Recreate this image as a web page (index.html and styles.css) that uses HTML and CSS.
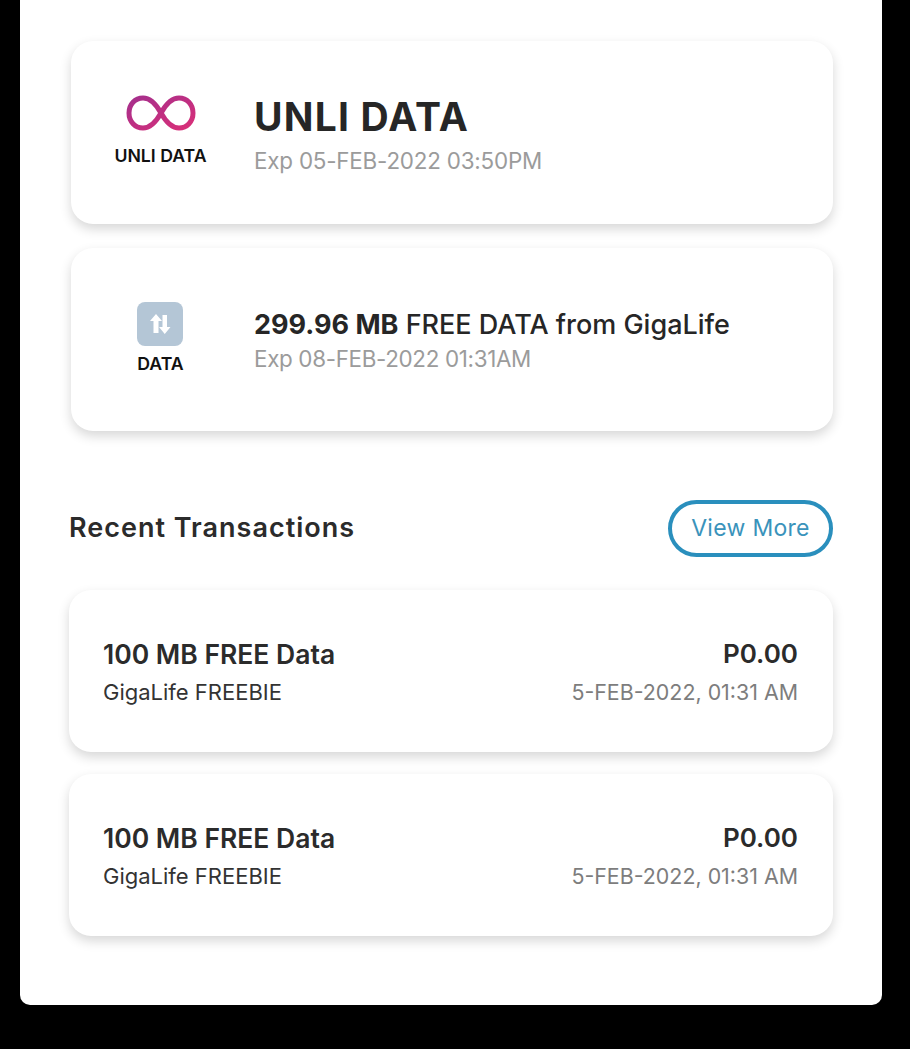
FILE: index.html
```html
<!DOCTYPE html>
<html lang="en">
<head>
<meta charset="utf-8">
<title>Balance</title>
<link rel="stylesheet" href="styles.css">
</head>
<body>
<main class="panel">
  <section class="plans">
    <article class="plan">
      <div class="plan-icon">
        <svg class="infinity" viewBox="0 0 70 36" width="70" height="36" aria-hidden="true">
          <defs>
            <linearGradient id="inf" x1="0" y1="0" x2="1" y2="1">
              <stop offset="0" stop-color="#a52f8c"/>
              <stop offset="1" stop-color="#d92f78"/>
            </linearGradient>
          </defs>
          <path d="M35 18C30 9 24.500 3 17 3C9 3 3 9.500 3 18C3 26.500 9 33 17 33C24.500 33 30 27 35 18C40 9 45.500 3 53 3C61 3 67 9.500 67 18C67 26.500 61 33 53 33C45.500 33 40 27 35 18Z" fill="none" stroke="url(#inf)" stroke-width="5"/>
        </svg>
        <span class="plan-label">UNLI DATA</span>
      </div>
      <div class="plan-body">
        <h2 class="plan-title">UNLI DATA</h2>
        <p class="plan-exp">Exp 05-FEB-2022 03:50PM</p>
      </div>
    </article>
    <article class="plan">
      <div class="plan-icon">
        <span class="data-badge">
          <svg viewBox="0 0 24 24" width="24" height="24" aria-hidden="true">
            <path d="M8 2L14 9H10.500V21H5.500V9H2Z M14.500 3H19V15H22.500L16.750 22L11 15H14.500Z" fill="#fff"/>
          </svg>
        </span>
        <span class="plan-label">DATA</span>
      </div>
      <div class="plan-body">
        <h2 class="plan-line"><strong>299.96 MB</strong> FREE DATA from GigaLife</h2>
        <p class="plan-exp plan-exp-short">Exp 08-FEB-2022 01:31AM</p>
      </div>
    </article>
  </section>

  <header class="recent-head">
    <h2 class="recent-title">Recent Transactions</h2>
    <a class="view-more" href="#">View More</a>
  </header>

  <section class="transactions">
    <article class="txn">
      <div class="txn-row">
        <span class="txn-name">100 MB FREE Data</span>
        <span class="txn-price">P0.00</span>
      </div>
      <div class="txn-row">
        <span class="txn-source">GigaLife FREEBIE</span>
        <span class="txn-date">5-FEB-2022, 01:31 AM</span>
      </div>
    </article>
    <article class="txn">
      <div class="txn-row">
        <span class="txn-name">100 MB FREE Data</span>
        <span class="txn-price">P0.00</span>
      </div>
      <div class="txn-row">
        <span class="txn-source">GigaLife FREEBIE</span>
        <span class="txn-date">5-FEB-2022, 01:31 AM</span>
      </div>
    </article>
  </section>
</main>
</body>
</html>
```
FILE: styles.css
```css
* { box-sizing: border-box; }
html, body { margin: 0; padding: 0; }
body {
  background: #000;
  width: 910px;
  height: 1049px;
  overflow: hidden;
  font-family: "Inter", "Liberation Sans", sans-serif;
  color: #262626;
}
h2, p { margin: 0; }
.panel {
  width: 862px;
  height: 1005px;
  margin-left: 20px;
  background: #fff;
  border-radius: 0 0 10px 10px;
  padding: 41px 49px 0 49px;
}
.plans { display: flex; flex-direction: column; gap: 24px; padding-left: 2px; }
.plan {
  height: 183px;
  background: #fff;
  border-radius: 22px;
  box-shadow: 0 5px 12px rgba(0, 0, 0, 0.16);
  display: flex;
  align-items: center;
}
.plan-icon {
  width: 183px;
  flex: none;
  display: flex;
  flex-direction: column;
  align-items: center;
  padding: 0 4px 3px 0;
}
.infinity { display: block; width: 70px; height: 36px; margin-bottom: 14px; }
.plan-label {
  font-size: 17.7px;
  line-height: 22px;
  font-weight: 600;
  color: #111;
}
.data-badge {
  width: 46px;
  height: 44px;
  border-radius: 8px;
  background: #b4c6d6;
  display: flex;
  align-items: center;
  justify-content: center;
  margin-right: 1px;
  margin-bottom: 7px;
}
.plan-body { padding-top: 3px; }
.plan-title { font-size: 39px; line-height: 48px; font-weight: 700; letter-spacing: 1.2px; color: #262626; margin-bottom: 5px; }
.plan-line { font-size: 27px; line-height: 34px; font-weight: 500; margin-bottom: 2px; }
.plan-line strong { font-weight: 700; }
.plan-exp { font-size: 22.4px; line-height: 30px; color: #9b9b9b; letter-spacing: -0.2px; }
.plan-exp-short { letter-spacing: -0.33px; }
.recent-head {
  display: flex;
  justify-content: space-between;
  align-items: center;
  margin-top: 69px;
  height: 57px;
}
.recent-title { font-size: 27px; line-height: 34px; font-weight: 600; letter-spacing: 1px; color: #2b2b2b; padding-bottom: 2px; }
.view-more {
  width: 165px;
  height: 57px;
  border: 4px solid #2a8fbd;
  border-radius: 29px;
  display: flex;
  align-items: center;
  justify-content: center;
  padding-bottom: 2px;
  font-size: 23px;
  letter-spacing: 0.3px;
  color: #3a93bb;
  text-decoration: none;
}
.transactions { display: flex; flex-direction: column; gap: 22px; margin-top: 33px; }
.txn {
  height: 162px;
  background: #fff;
  border-radius: 22px;
  box-shadow: 0 5px 12px rgba(0, 0, 0, 0.16);
  padding: 47px 35px 0 34px;
}
.txn-row { display: flex; justify-content: space-between; align-items: center; }
.txn-row + .txn-row { margin-top: 6px; }
.txn-name { font-size: 26.5px; line-height: 34px; font-weight: 600; color: #2b2b2b; }
.txn-price { font-size: 26px; line-height: 34px; font-weight: 600; color: #2b2b2b; }
.txn-source { font-size: 22px; line-height: 30px; color: #333; }
.txn-date { font-size: 21.4px; line-height: 30px; color: #7d7d7d; }
```
